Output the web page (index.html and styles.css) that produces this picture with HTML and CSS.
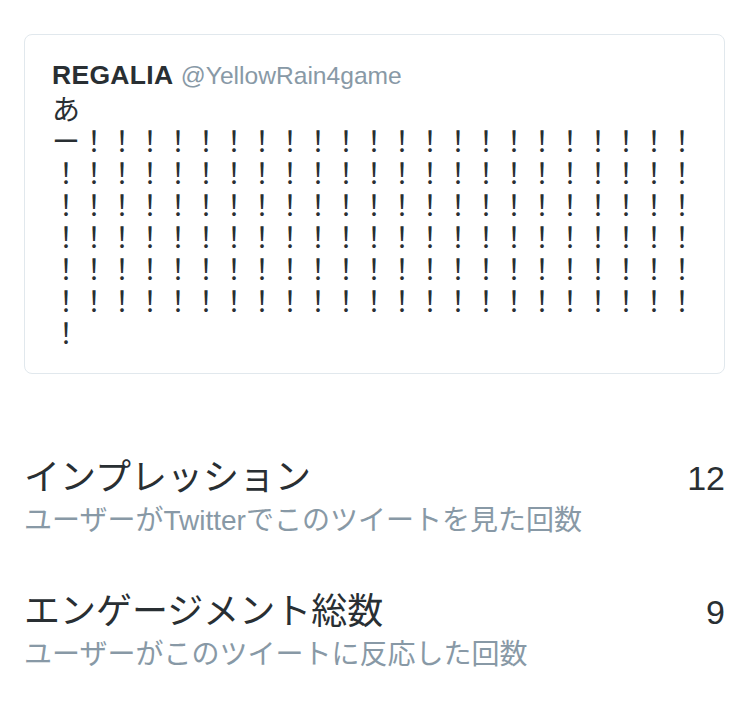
FILE: index.html
```html
<!doctype html>
<html lang="ja">
<head>
	<meta charset="UTF-8" />
	<title>ツイートアクティビティ</title>
<link rel="stylesheet" href="styles.css">
</head>
<body>
	<section class="card">
		<div class="user">
			<span class="name">REGALIA</span>
			<span class="handle">@YellowRain4game</span>
		</div>
		<p class="tweet">あ<br>
			ー！！！！！！！！！！！！！！！！！！！！！！<br>
			！！！！！！！！！！！！！！！！！！！！！！！<br>
			！！！！！！！！！！！！！！！！！！！！！！！<br>
			！！！！！！！！！！！！！！！！！！！！！！！<br>
			！！！！！！！！！！！！！！！！！！！！！！！<br>
			！！！！！！！！！！！！！！！！！！！！！！！<br>
			！</p>
	</section>
	<ul class="stats">
		<li>
			<div class="info">
				<p class="label">インプレッション</p>
				<p class="note">ユーザーがTwitterでこのツイートを見た回数</p>
			</div>
			<span class="count">12</span>
		</li>
		<li>
			<div class="info">
				<p class="label">エンゲージメント総数</p>
				<p class="note">ユーザーがこのツイートに反応した回数</p>
			</div>
			<span class="count">9</span>
		</li>
	</ul>
</body>
</html>
```

FILE: styles.css
```css
*{
	margin: 0;
	padding: 0;
}
body{
	background: #fff;
	padding: 34px 25px 0 24px;
	font-family: "Liberation Sans", "Noto Sans CJK JP", sans-serif;
	color: #292f33;
}
.card{
	border: 1px solid #e1e8ed;
	border-radius: 8px;
	padding: 24px 24px 22px 27px;
}
.user{
	line-height: 32px;
	white-space: nowrap;
}
.name{
	font-size: 26.5px;
	font-weight: bold;
	letter-spacing: 0.3px;
	color: #292f33;
	margin-right: 3px;
}
.handle{
	font-size: 24.6px;
	color: #8899a6;
}
.tweet{
	font-size: 28px;
	line-height: 32px;
	color: #292f33;
	white-space: nowrap;
}
.stats{
	list-style: none;
	margin-top: 82px;
}
.stats li{
	display: flex;
	justify-content: space-between;
	align-items: baseline;
	margin-bottom: 51px;
}
.label{
	font-size: 36px;
	line-height: 44px;
	color: #292f33;
}
.note{
	margin-top: 3px;
	font-size: 28px;
	line-height: 36px;
	color: #8899a6;
}
.count{
	font-size: 34px;
	line-height: 44px;
	color: #292f33;
}
```
